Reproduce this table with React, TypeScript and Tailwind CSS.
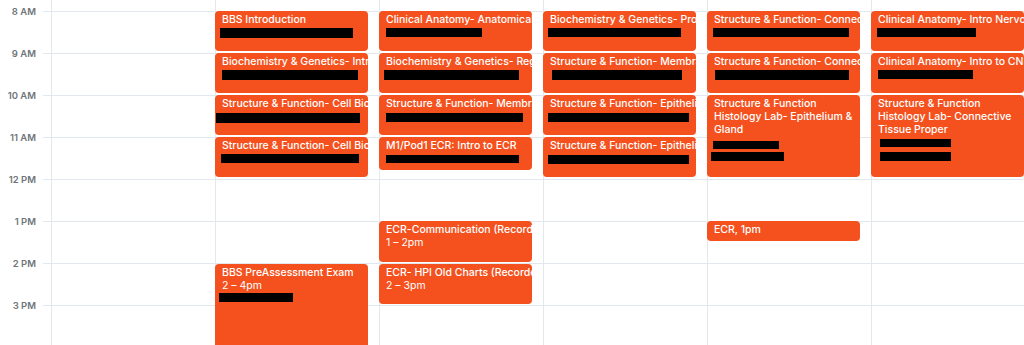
import React from 'react'

type Bar = [number, number, number, number] // dx, dy, w, h

type CalEvent = {
  box: string
  title: string[]
  wrap?: boolean
  sub?: string
  bars?: Bar[]
}

const hours = ['8 AM', '9 AM', '10 AM', '11 AM', '12 PM', '1 PM', '2 PM', '3 PM']

const days: CalEvent[][] = [
  [],
  [
    { box: 'mt-[11px] h-[40px]', title: ['BBS Introduction'], bars: [[5, 17, 133, 10]] },
    { box: 'mt-[2px] h-[40px]', title: ['Biochemistry & Genetics- Introduction'], bars: [[7, 17, 136, 10]] },
    { box: 'mt-[2px] h-[40px]', title: ['Structure & Function- Cell Biology'], bars: [[1, 18, 144, 10]] },
    { box: 'mt-[2px] h-[40px]', title: ['Structure & Function- Cell Biology II'], bars: [[6, 17, 138, 9]] },
    { box: 'mt-[87px] h-[90px]', title: ['BBS PreAssessment Exam'], sub: '2 – 4pm', bars: [[4, 29, 74, 9]] },
  ],
  [
    { box: 'mt-[11px] h-[40px]', title: ['Clinical Anatomy- Anatomical Terms'], bars: [[7, 17, 96, 9]] },
    { box: 'mt-[2px] h-[40px]', title: ['Biochemistry & Genetics- Regulation'], bars: [[5, 17, 135, 10]] },
    { box: 'mt-[2px] h-[40px]', title: ['Structure & Function- Membranes'], bars: [[7, 18, 137, 9]] },
    { box: 'mt-[2px] h-[33px]', title: ['M1/Pod1 ECR: Intro to ECR'], bars: [[7, 18, 133, 8]] },
    { box: 'mt-[51px] h-[41px]', title: ['ECR-Communication (Recorded)'], sub: '1 – 2pm' },
    { box: 'mt-[2px] h-[40px]', title: ['ECR- HPI Old Charts (Recorded)'], sub: '2 – 3pm' },
  ],
  [
    { box: 'mt-[11px] h-[40px]', title: ['Biochemistry & Genetics- Proteins'], bars: [[5, 17, 133, 9]] },
    { box: 'mt-[2px] h-[40px]', title: ['Structure & Function- Membranes'], bars: [[9, 17, 130, 10]] },
    { box: 'mt-[2px] h-[40px]', title: ['Structure & Function- Epithelium'], bars: [[5, 18, 141, 9]] },
    { box: 'mt-[2px] h-[40px]', title: ['Structure & Function- Epithelium II'], bars: [[5, 18, 141, 9]] },
  ],
  [
    { box: 'mt-[11px] h-[40px]', title: ['Structure & Function- Connective'], bars: [[6, 17, 136, 9]] },
    { box: 'mt-[2px] h-[40px]', title: ['Structure & Function- Connective'], bars: [[8, 17, 134, 10]] },
    {
      box: 'mt-[2px] h-[82px]',
      title: ['Structure & Function', 'Histology Lab- Epithelium &', 'Gland'],
      wrap: true,
      bars: [
        [6, 46, 66, 8],
        [4, 57, 73, 9],
      ],
    },
    { box: 'mt-[44px] h-[20px]', title: ['ECR, 1pm'] },
  ],
  [
    { box: 'mt-[11px] h-[40px]', title: ['Clinical Anatomy- Intro Nervous System'], bars: [[6, 17, 99, 9]] },
    { box: 'mt-[2px] h-[40px]', title: ['Clinical Anatomy- Intro to CNS'], bars: [[7, 17, 95, 9]] },
    {
      box: 'mt-[2px] h-[82px]',
      title: ['Structure & Function', 'Histology Lab- Connective', 'Tissue Proper'],
      wrap: true,
      bars: [
        [9, 44, 71, 8],
        [9, 57, 71, 9],
      ],
    },
  ],
]

const gridLines =
  'bg-[linear-gradient(to_bottom,#e3e7ee_1px,transparent_1px)] bg-[length:100%_42px] bg-[position:0_11px]'

function EventCard({ ev }: { ev: CalEvent }) {
  return (
    <div
      className={`${ev.box} relative -ml-px w-[153px] shrink-0 overflow-hidden rounded-[4px] bg-[#f4511e] pl-[7px] pt-[2px] text-[10.5px] leading-[13px] text-white`}
    >
      {ev.title.map((t, i) => (
        <div key={i} className="whitespace-nowrap font-medium">
          {t}
        </div>
      ))}
      {ev.sub && <div className="whitespace-nowrap">{ev.sub}</div>}
      {/* redaction bars sit over the location line */}
      {ev.bars?.map(([dx, dy, w, h], i) => (
        <div key={i} className="absolute bg-black" style={{ left: dx, top: dy, width: w, height: h }} />
      ))}
    </div>
  )
}

export default function App() {
  return (
    <div className="flex h-[345px] w-[1024px] overflow-hidden bg-white font-['Inter','Liberation_Sans',sans-serif]">
      {/* Time gutter */}
      <div className="flex w-[51px] shrink-0">
        <div className="flex w-[43px] flex-col pt-[6px]">
          {hours.map((h) => (
            <div
              key={h}
              className="h-[42px] shrink-0 pr-[7px] text-right text-[9.5px] font-semibold leading-[12px] text-[#70757a]"
            >
              {h}
            </div>
          ))}
        </div>
        <div className={`w-[8px] ${gridLines}`} />
      </div>

      {/* Day columns */}
      {days.map((col, ci) => (
        <div
          key={ci}
          className={`flex w-[164px] shrink-0 flex-col border-l border-[#e3e7ee] ${gridLines}`}
        >
          {col.map((ev, ei) => (
            <EventCard key={ei} ev={ev} />
          ))}
        </div>
      ))}
    </div>
  )
}
